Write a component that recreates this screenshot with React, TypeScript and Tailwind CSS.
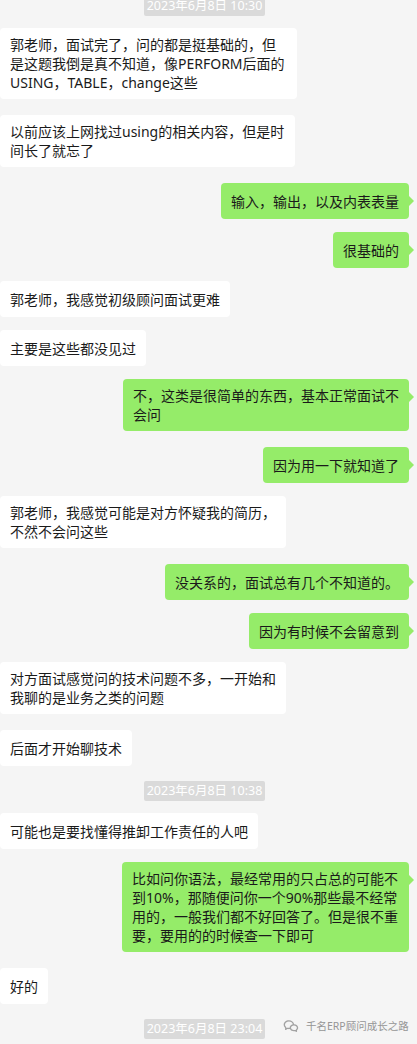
import React from "react";
import { RiWechatLine } from "react-icons/ri";

type Msg =
  | { kind: "ts"; text: string; mt: string }
  | { kind: "in" | "out"; lines: string[]; mt: string; w?: string };

const msgs: Msg[] = [
  { kind: "ts", text: "2023年6月8日 10:30", mt: "-mt-[4px]" },
  {
    kind: "in",
    mt: "mt-[12px]",
    w: "w-[297px]",
    lines: [
      "郭老师，面试完了，问的都是挺基础的，但",
      "是这题我倒是真不知道，像PERFORM后面的",
      "USING，TABLE，change这些",
    ],
  },
  {
    kind: "in",
    mt: "mt-[16px]",
    w: "w-[295px]",
    lines: ["以前应该上网找过using的相关内容，但是时", "间长了就忘了"],
  },
  { kind: "out", mt: "mt-[16px]", lines: ["输入，输出，以及内表表量"] },
  { kind: "out", mt: "mt-[13px]", lines: ["很基础的"] },
  { kind: "in", mt: "mt-[13px]", lines: ["郭老师，我感觉初级顾问面试更难"] },
  { kind: "in", mt: "mt-[13px]", lines: ["主要是这些都没见过"] },
  {
    kind: "out",
    mt: "mt-[13px]",
    lines: ["不，这类是很简单的东西，基本正常面试不", "会问"],
  },
  { kind: "out", mt: "mt-[16px]", lines: ["因为用一下就知道了"] },
  {
    kind: "in",
    mt: "mt-[13px]",
    lines: ["郭老师，我感觉可能是对方怀疑我的简历，", "不然不会问这些"],
  },
  { kind: "out", mt: "mt-[16px]", lines: ["没关系的，面试总有几个不知道的。"] },
  { kind: "out", mt: "mt-[13px]", lines: ["因为有时候不会留意到"] },
  {
    kind: "in",
    mt: "mt-[13px]",
    lines: ["对方面试感觉问的技术问题不多，一开始和", "我聊的是业务之类的问题"],
  },
  { kind: "in", mt: "mt-[16px]", lines: ["后面才开始聊技术"] },
  { kind: "ts", text: "2023年6月8日 10:38", mt: "mt-[15px]" },
  { kind: "in", mt: "mt-[12px]", lines: ["可能也是要找懂得推卸工作责任的人吧"] },
  {
    kind: "out",
    mt: "mt-[13px]",
    w: "w-[287px]",
    lines: [
      "比如问你语法，最经常用的只占总的可能不",
      "到10%，那随便问你一个90%那些最不经常",
      "用的，一般我们都不好回答了。但是很不重",
      "要，要用的的时候查一下即可",
    ],
  },
  { kind: "in", mt: "mt-[16px]", lines: ["好的"] },
  { kind: "ts", text: "2023年6月8日 23:04", mt: "mt-[15px]" },
];

function Bubble({ m }: { m: Exclude<Msg, { kind: "ts" }> }) {
  const out = m.kind === "out";
  return (
    <div className={`flex ${out ? "justify-end pr-[8px]" : "justify-start"} ${m.mt}`}>
      <div
        className={`relative flex items-center min-h-[36px] py-[7px] px-[10px] rounded-[4px] text-[14px] leading-[19px] text-[#1a1a1a] ${
          out ? "bg-[#95ec69]" : "bg-white"
        } ${m.w ?? ""}`}
      >
        <div className="flex flex-col">
          {m.lines.map((l, i) => (
            <span key={i} className="whitespace-nowrap">
              {l}
            </span>
          ))}
        </div>
        {out && (
          <span className="absolute right-[-5px] top-[13px] w-0 h-0 border-y-[5px] border-y-transparent border-l-[5px] border-l-[#95ec69]" />
        )}
      </div>
    </div>
  );
}

export default function App() {
  return (
    <div className="relative w-[417px] h-[1044px] overflow-hidden bg-[#f5f5f5] font-['Noto_Sans','Noto_Sans_CJK_SC',sans-serif]">
      <div className="flex flex-col">
        {msgs.map((m, i) =>
          m.kind === "ts" ? (
            <div key={i} className={`flex pl-[144px] ${m.mt}`}>
              <div className="w-[121px] h-[20px] flex items-center justify-center rounded-[2px] bg-[#dadada] text-white text-[12.5px] leading-[20px] whitespace-nowrap">
                {m.text}
              </div>
            </div>
          ) : (
            <Bubble key={i} m={m} />
          )
        )}
      </div>
      <div className="absolute left-[282px] top-[1018px] flex items-center gap-[6px] text-[#8c8c8c] opacity-90">
        <RiWechatLine className="w-[18px] h-[16px] text-[#9a9a9a]" />
        <span className="text-[10.5px] leading-[14px] whitespace-nowrap">千名ERP顾问成长之路</span>
      </div>
    </div>
  );
}
